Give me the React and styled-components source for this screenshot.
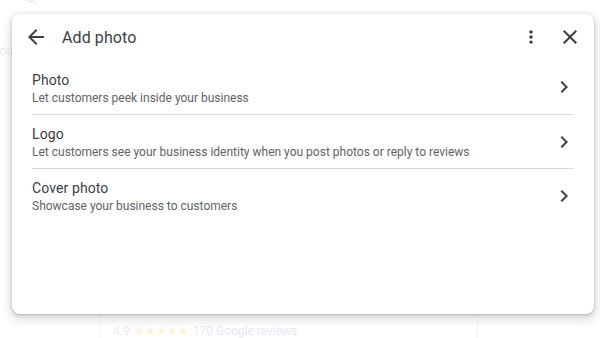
import React from "react";
import styled, { createGlobalStyle } from "styled-components";

const Global = createGlobalStyle`
  html, body { margin: 0; padding: 0; background: #fff; }
  body { font-family: Roboto, "Noto Sans", Arial, sans-serif; overflow: hidden; }
`;

const Page = styled.div`
  position: relative;
  width: 600px;
  height: 338px;
  overflow: hidden;
  display: flex;
  flex-direction: column;
`;

const BgSearch = styled.div`
  margin-top: -9px;
  margin-left: 24px;
  height: 14px;
`;

const BgTools = styled.div`
  margin-top: 38px;
  margin-left: -8px;
  font-size: 13px;
  color: #eeeeee;
  line-height: 16px;
`;

const BgCard = styled.div`
  margin-top: auto;
  margin-left: 100px;
  width: 378px;
  height: 40px;
  border-left: 1px solid #f4f4f4;
  border-right: 1px solid #f4f4f4;
  display: flex;
  align-items: flex-end;
  padding: 0 0 0 12px;
  box-sizing: border-box;
`;

const Rating = styled.div`
  display: flex;
  align-items: center;
  gap: 4px;
  font-size: 12px;
  line-height: 16px;
  color: #ececec;
  height: 16px;
  margin-bottom: -1px;
`;

const Stars = styled.span`
  color: #fdf3d4;
  font-size: 12px;
`;

const Reviews = styled.span`
  color: #e8e8f6;
`;

const Dialog = styled.div`
  position: absolute;
  left: 12px;
  top: 14px;
  width: 582px;
  height: 300px;
  background: #fff;
  border-radius: 8px;
  box-shadow: 0 4px 8px 3px rgba(60, 64, 67, 0.15), 0 1px 3px rgba(60, 64, 67, 0.3);
  display: flex;
  flex-direction: column;
`;

const Header = styled.div`
  height: 46px;
  display: flex;
  align-items: center;
  padding: 0 12px 0 12px;
`;

const IconButton = styled.button`
  width: 24px;
  height: 24px;
  padding: 0;
  border: 0;
  background: none;
  display: flex;
  align-items: center;
  justify-content: center;
  color: #3c4043;
  cursor: pointer;
  margin-right: ${(p) => p.$mr || 0}px;
`;

const Title = styled.h1`
  margin: 0 0 0 14px;
  font-size: 16px;
  font-weight: 400;
  color: #3c4043;
  flex: 1;
  letter-spacing: 0.1px;
`;

const List = styled.div`
  display: flex;
  flex-direction: column;
  padding: 0 20px;
`;

const Row = styled.div`
  height: 54px;
  display: flex;
  align-items: center;
  border-top: ${(p) => (p.$divider ? "1px solid #dadce0" : "none")};
  box-sizing: border-box;
`;

const RowText = styled.div`
  flex: 1;
  display: flex;
  flex-direction: column;
  padding-top: 2px;
`;

const RowTitle = styled.div`
  font-size: 14px;
  line-height: 19px;
  color: #3c4043;
  letter-spacing: 0.1px;
`;

const RowSub = styled.div`
  font-size: 12px;
  line-height: 16px;
  color: #5f6368;
  letter-spacing: 0;
`;

const Chevron = styled.div`
  width: 24px;
  height: 24px;
  margin-right: -2px;
  color: #3c4043;
`;

const ArrowBack = () => (
  <svg width="24" height="24" viewBox="0 0 24 24" fill="currentColor">
    <path d="M20 11H7.83l5.59-5.59L12 4l-8 8 8 8 1.41-1.41L7.83 13H20v-2z" />
  </svg>
);
const MoreVert = () => (
  <svg width="24" height="24" viewBox="0 0 24 24" fill="currentColor">
    <path d="M12 8c1.1 0 2-.9 2-2s-.9-2-2-2-2 .9-2 2 .9 2 2 2zm0 2c-1.1 0-2 .9-2 2s.9 2 2 2 2-.9 2-2-.9-2-2-2zm0 6c-1.1 0-2 .9-2 2s.9 2 2 2 2-.9 2-2-.9-2-2-2z" transform="translate(12 12) scale(0.85) translate(-12 -12)" />
  </svg>
);
const Close = () => (
  <svg width="24" height="24" viewBox="0 0 24 24" fill="currentColor">
    <path d="M19 6.41L17.59 5 12 10.59 6.41 5 5 6.41 10.59 12 5 17.59 6.41 19 12 13.41 17.59 19 19 17.59 13.41 12z" />
  </svg>
);
const ChevronRight = () => (
  <svg width="24" height="24" viewBox="0 0 24 24" fill="currentColor">
    <path d="M10 6L8.59 7.41 13.17 12l-4.58 4.59L10 18l6-6z" />
  </svg>
);

const items = [
  { t: "Photo", s: "Let customers peek inside your business" },
  { t: "Logo", s: "Let customers see your business identity when you post photos or reply to reviews" },
  { t: "Cover photo", s: "Showcase your business to customers" },
];

export default function App() {
  return (
    <>
      <Global />
      <Page>
        <BgSearch>
          <svg width="14" height="14" viewBox="0 0 24 24" fill="none" stroke="#e6ebf8" strokeWidth="2.5">
            <circle cx="10" cy="10" r="7" />
            <path d="M15 15l6 6" />
          </svg>
        </BgSearch>
        <BgTools>Tools</BgTools>
        <BgCard>
          <Rating>
            4.9 <Stars>★★★★★</Stars> <Reviews>170 Google reviews</Reviews>
          </Rating>
        </BgCard>
        <Dialog>
          <Header>
            <IconButton aria-label="Back"><ArrowBack /></IconButton>
            <Title>Add photo</Title>
            <IconButton aria-label="More" $mr={15}><MoreVert /></IconButton>
            <IconButton aria-label="Close"><Close /></IconButton>
          </Header>
          <List>
            {items.map((it, i) => (
              <Row key={it.t} $divider={i > 0}>
                <RowText>
                  <RowTitle>{it.t}</RowTitle>
                  <RowSub>{it.s}</RowSub>
                </RowText>
                <Chevron><ChevronRight /></Chevron>
              </Row>
            ))}
          </List>
        </Dialog>
      </Page>
    </>
  );
}
